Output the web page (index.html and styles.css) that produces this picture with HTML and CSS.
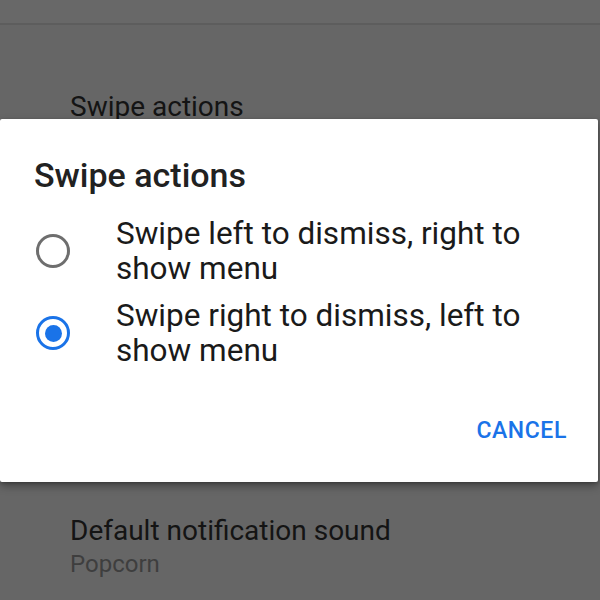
FILE: index.html
```html
<!DOCTYPE html>
<html>
<head>
<meta charset="utf-8">
<link rel="stylesheet" href="styles.css">
</head>
<body>
<div class="screen">
  <div class="appbar"></div>
  <div class="pref pref-first">
    <div class="pref-title">Swipe actions</div>
  </div>
  <div class="pref pref-last">
    <div class="pref-title">Default notification sound</div>
    <div class="pref-summary">Popcorn</div>
  </div>

  <div class="dialog">
    <div class="dialog-title">Swipe actions</div>
    <div class="options">
      <div class="option">
        <span class="radio"></span>
        <span class="option-label">Swipe left to dismiss, right to show menu</span>
      </div>
      <div class="option">
        <span class="radio radio-checked"></span>
        <span class="option-label">Swipe right to dismiss, left to show menu</span>
      </div>
    </div>
    <div class="actions">
      <span class="btn">CANCEL</span>
    </div>
  </div>
</div>
</body>
</html>
```
FILE: styles.css
```css
html, body {
  margin: 0;
  padding: 0;
}
body {
  background: #666666;
  font-family: Roboto, "Liberation Sans", sans-serif;
}
.screen {
  position: relative;
  width: 600px;
  height: 600px;
  overflow: hidden;
  background: #666666;
}
.appbar {
  height: 23px;
  background: #686868;
  border-bottom: 2px solid #5d5d5d;
}
.pref {
  padding-left: 70px;
}
.pref-first {
  box-sizing: border-box;
  padding-top: 66px;
  height: 490px;
}
.pref-title {
  font-size: 28px;
  line-height: 32px;
  color: #141414;
  font-weight: 400;
}
.pref-summary {
  margin-top: 1px;
  font-size: 24px;
  line-height: 32px;
  color: #3e3e3e;
}
.dialog {
  position: absolute;
  top: 119px;
  left: 0;
  width: 598px;
  height: 363px;
  background: #ffffff;
  border-radius: 2px;
  box-shadow: 0 4px 8px rgba(0,0,0,0.35), 0 1px 3px rgba(0,0,0,0.2);
  box-sizing: border-box;
  padding: 36px 0 0 0;
  display: flex;
  flex-direction: column;
}
.dialog-title {
  padding-left: 34px;
  font-size: 34px;
  line-height: 40px;
  font-weight: 500;
  color: #212121;
}
.options {
  margin-top: 21px;
  display: flex;
  flex-direction: column;
  gap: 12px;
}
.option {
  display: flex;
  align-items: center;
}
.radio {
  flex: none;
  width: 28px;
  height: 28px;
  border: 3.5px solid #6e6e6e;
  border-radius: 50%;
  margin-left: 36px;
  margin-right: 46px;
  box-sizing: content-box;
  position: relative;
}
.radio-checked {
  border-color: #1a73e8;
}
.radio-checked::after {
  content: "";
  position: absolute;
  left: 5.5px;
  top: 5.5px;
  width: 17px;
  height: 17px;
  border-radius: 50%;
  background: #1a73e8;
}
.option-label {
  font-size: 31.5px;
  line-height: 35px;
  color: #1a1a1a;
  width: 440px;
}
.actions {
  margin-top: auto;
  display: flex;
  justify-content: flex-end;
  padding: 0 31px 37px 0;
}
.btn {
  font-size: 23px;
  font-weight: 500;
  color: #1a73e8;
  letter-spacing: 0.6px;
  line-height: 28px;
}
```
